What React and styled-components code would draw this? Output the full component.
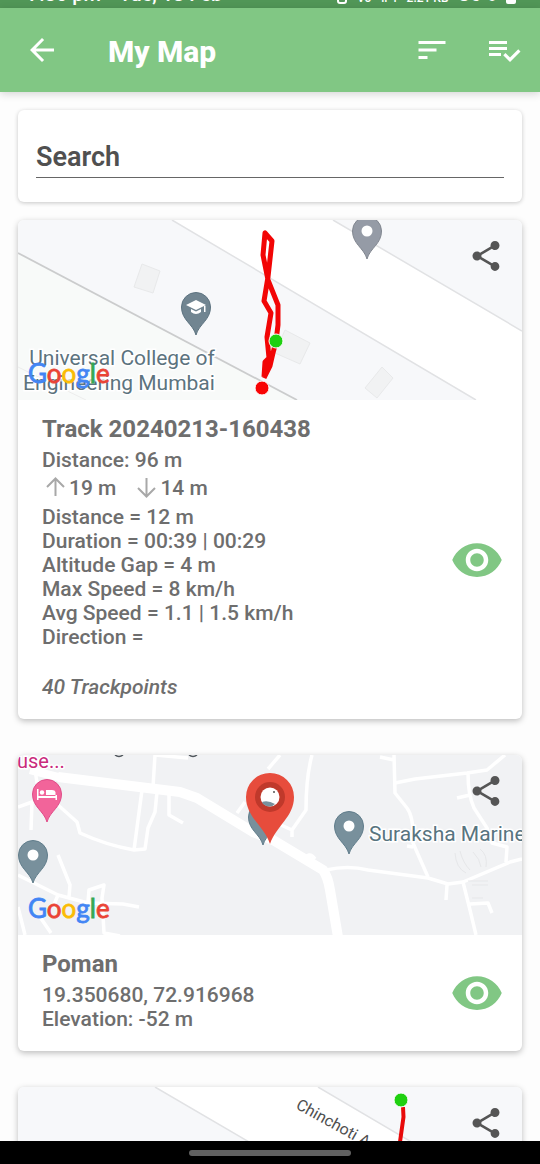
import React from "react";
import styled, { createGlobalStyle } from "styled-components";

const GlobalStyle = createGlobalStyle`
  *, *::before, *::after { box-sizing: border-box; }
  body { margin: 0; background: #fdfdfd; }
  body, button, input { font-family: Roboto, "Noto Sans", sans-serif; }
`;

const Screen = styled.div`
  display: flex;
  flex-direction: column;
  height: 100vh;
  background: #fdfdfd;
  color: #6e6e6e;
`;

const StatusBar = styled.div`
  display: flex;
  flex: none;
  align-items: flex-end;
  justify-content: space-between;
  height: 8px;
  padding: 0 24px 4px 28px;
  overflow: hidden;
  background: #519657;
  color: #fff;
`;

const StatusGroup = styled.div`
  display: flex;
  align-items: flex-end;
  gap: ${(p) => p.$gap}px;
  white-space: pre;
`;

const StatusText = styled.span`
  font-size: ${(p) => (p.$small ? 12 : 20)}px;
  font-weight: 500;
  line-height: ${(p) => (p.$small ? 12 : 20)}px;
`;

const Toolbar = styled.header`
  position: relative;
  display: flex;
  flex: none;
  align-items: center;
  height: 84px;
  padding: 0 18px 0 24px;
  background: #81c784;
  color: #fff;
  box-shadow: 0 2px 8px rgba(0, 0, 0, 0.16);
`;

const Title = styled.h1`
  flex: 1;
  margin: 0 0 0 48px;
  padding-top: 3px;
  font-size: 30px;
  font-weight: 800;
  line-height: 36px;
`;

const Actions = styled.div`
  display: flex;
  gap: 36px;
`;

const IconButton = styled.button`
  display: block;
  flex: none;
  padding: 0;
  border: 0;
  background: none;
  color: inherit;
  cursor: pointer;

  svg {
    display: block;
    width: ${(p) => p.$size || 36}px;
    height: ${(p) => p.$size || 36}px;
    fill: currentColor;
  }
`;

const Content = styled.main`
  flex: 1;
  min-height: 0;
  padding: 18px;
  overflow: hidden auto;
  scrollbar-width: none;
`;

const cardShadow = "0 2px 6px rgba(0, 0, 0, 0.26)";

const SearchBox = styled.form`
  padding: 26px 18px 24px;
  margin-bottom: 18px;
  border-radius: 6px;
  background: #fff;
  box-shadow: 0 1px 4px rgba(0, 0, 0, 0.22);
`;

const SearchInput = styled.input`
  display: block;
  width: 100%;
  height: 42px;
  padding: 0;
  border: 0;
  border-bottom: 1px solid #666;
  border-radius: 0;
  outline: 0;
  background: none;
  color: #505050;
  font-size: 27px;
  font-weight: 600;

  &::placeholder { color: #505050; opacity: 1; }
`;

const List = styled.div`
  display: flex;
  flex-direction: column;
  gap: 36px;
`;

const Card = styled.article`
  border-radius: 6px;
  background: #fff;
  box-shadow: ${cardShadow};
`;

const MapArea = styled.div`
  position: relative;
  height: 180px;
  overflow: hidden;
  border-radius: 6px 6px 0 0;
`;

const MapDrawing = styled.svg`
  display: block;
  width: 100%;
  height: 100%;
  font-family: Roboto, "Noto Sans", sans-serif;
`;

const ShareButton = styled(IconButton)`
  position: absolute;
  top: 18px;
  right: 18px;
  color: #555;
`;

const CardBody = styled.div`
  display: flex;
  align-items: center;
  justify-content: space-between;
  padding: 0 18px 0 24px;
`;

const Details = styled.div`
  padding: 15px 0 20px;
`;

const Heading = styled.h2`
  margin: 0 0 5px;
  font-size: 24px;
  font-weight: 700;
  line-height: 28px;
`;

const Line = styled.p`
  margin: 0;
  font-size: 21px;
  font-weight: 500;
  line-height: 24px;
`;

const Climb = styled.div`
  display: flex;
  gap: 20px;
  padding: 4px 0 5px 3px;
`;

const ClimbItem = styled(Line)`
  display: flex;
  align-items: center;
  gap: 3px;

  svg { width: 21px; height: 24px; }
`;

const Footnote = styled(Line)`
  margin-top: 26px;
  font-style: italic;
`;

const ViewButton = styled(IconButton)`
  color: #81c784;
`;

const NavBar = styled.footer`
  display: flex;
  flex: none;
  align-items: center;
  justify-content: center;
  height: 23px;
  background: #000;
`;

const NavPill = styled.div`
  width: 30%;
  height: 6px;
  border-radius: 3px;
  background: #616161;
`;

const Icon = ({ d }) => (
  <svg viewBox="0 0 24 24" aria-hidden="true">
    <path d={d} />
  </svg>
);

const ICONS = {
  back: "M20 11H7.83l5.59-5.59L12 4l-8 8 8 8 1.41-1.41L7.83 13H20v-2z",
  sort: "M3 18h6v-2H3v2zM3 6v2h18V6H3zm0 7h12v-2H3v2z",
  select:
    "M14 10H2v2h12v-2zm0-4H2v2h12V6zM2 16h8v-2H2v2zm19.500-4.500L23 13l-6.990 7-4.510-4.500L13 14l3.010 3 5.490-5.500z",
  share:
    "M18 16.080c-.76 0-1.440.3-1.960.77L8.910 12.700c.05-.23.09-.46.09-.7s-.04-.47-.09-.7l7.050-4.110c.54.5 1.250.81 2.040.81 1.660 0 3-1.340 3-3s-1.340-3-3-3-3 1.340-3 3c0 .24.04.47.09.7L8.040 9.810C7.500 9.310 6.790 9 6 9c-1.660 0-3 1.340-3 3s1.340 3 3 3c.79 0 1.500-.31 2.040-.81l7.120 4.160c-.05.21-.08.43-.08.65 0 1.610 1.310 2.920 2.920 2.920s2.920-1.310 2.920-2.920-1.310-2.920-2.920-2.920z",
  eye: "M12 4.500C7 4.500 2.730 7.610 1 12c1.730 4.390 6 7.500 11 7.500s9.270-3.110 11-7.500c-1.730-4.390-6-7.500-11-7.500zM12 17c-2.760 0-5-2.240-5-5s2.240-5 5-5 5 2.240 5 5-2.240 5-5 5zm0-8c-1.660 0-3 1.340-3 3s1.340 3 3 3 3-1.340 3-3-1.340-3-3-3z",
};

const ThinArrow = ({ down }) => (
  <svg viewBox="0 0 21 24" fill="none" stroke="#a8a8a8" strokeWidth="2" aria-hidden="true">
    {down ? <path d="M10.500 2v18M2 12l8.500 8.500L19 12" /> : <path d="M10.500 20V3M2 11l8.500-8.500L19 11" />}
  </svg>
);

const Pin = ({ x, y, fill, edge, children }) => (
  <g transform={`translate(${x} ${y})`}>
    <path
      d="M0 28C-3 17-14.500 13-14.500 0A14.500 14.500 0 1 1 14.500 0C14.500 13 3 17 0 28Z"
      fill={fill}
      stroke={edge}
      strokeWidth="1"
    />
    {children || <circle r="5.500" fill="#fff" />}
  </g>
);

const googleLetters = [
  ["G", "#4285f4"],
  ["o", "#ea4335"],
  ["o", "#fbbc05"],
  ["g", "#4285f4"],
  ["l", "#34a853"],
  ["e", "#ea4335"],
];

const GoogleMark = ({ y }) => (
  <text x="10" y={y} fontFamily="Lato, sans-serif" fontSize="26" strokeWidth="0.800">
    {googleLetters.map(([letter, color], i) => (
      <tspan key={i} fill={color} stroke={color}>
        {letter}
      </tspan>
    ))}
  </text>
);

const Dot = ({ x, y, fill }) => <circle cx={x} cy={y} r="7" fill={fill} stroke="#fff" strokeWidth="1" />;

const mapProps = { viewBox: "0 0 504 180", preserveAspectRatio: "xMidYMid slice", role: "img" };

const CollegeMap = () => (
  <MapDrawing {...mapProps} aria-label="Map of the recorded track">
    <rect width="504" height="180" fill="#f7f8fa" />
    <path d="M0 33 279 180H0Z" fill="#f8faf9" />
    <path d="M154 0H315L504 111V180H458Z" fill="#fff" />
    <path d="M154 0 458 180M315 0 504 111" stroke="#e1e2e4" strokeWidth="1.500" />
    <path d="M0 33 279 180" stroke="#cbcccd" strokeWidth="1.800" />
    <path d="M0 147 68 180" stroke="#ececec" />
    <g fill="#f1f2f3" stroke="#e8e9ea">
      <path d="M124 44 142 51 135 73 116 67Z" />
      <path d="M267 110 292 123 282 144 257 133Z" />
      <path d="M364 147 375 158 359 178 347 168Z" />
    </g>
    <Pin x={349} y={11} fill="#959ba6" edge="#80868f" />
    <Pin x={178} y={87} fill="#718591" edge="#5d7380">
      <path d="M0-7 10-2 0 3-10-2Z" fill="#fff" />
      <path d="M-5 2v3q5 4 10 0V2L0 4.500ZM8-1h1.500v6H8Z" fill="#fff" />
    </Pin>
    <g fill="#5c737e" fontSize="21" stroke="#fff" strokeWidth="3" paintOrder="stroke" textAnchor="middle">
      <text x="104" y="145">Universal College of</text>
      <text x="101" y="170">Engineering Mumbai</text>
    </g>
    <g stroke="#f8faf9" strokeWidth="3" strokeLinecap="round">
      <path d="M14 149 36 149M40 160H88" strokeOpacity="0.700" />
    </g>
    <GoogleMark y={163} />
    <path
      d="M246 157 247 142 251 138 249 117 253 93 246 81 250 57 254 21 247 13 245 35 250 60 260 85 260 105 258 121 255 133 252 146 246 158M248 153 253 131M250 149 251 139"
      fill="none"
      stroke="#f20505"
      strokeWidth="5"
      strokeLinejoin="round"
    />
    <Dot x={258} y={121} fill="#1fd010" />
    <Dot x={244} y={168} fill="#f80404" />
  </MapDrawing>
);

const PomanMap = () => (
  <MapDrawing {...mapProps} aria-label="Map of Poman">
    <rect width="504" height="180" fill="#f1f2f4" />
    <g fill="none" stroke="#fff" strokeWidth="3.500" strokeLinejoin="round">
      <path d="M137 0 135 32M124 35 116 95M139 37 137 57 130 73 127 94 116 95Q88 90 62 78L59 67 40 50 19 28 15 0" />
      <path d="M151 40V60L165 68M0 52 14 47 13 75M219 58 227 47M137 0 170 3" />
      <path d="M0 120 40 140 70 148 105 149 121 152M40 100 52 130 51 142M70 147 71 135 86 130 84 143 86 178 102 181M0 152 7 180M22 162 33 178M40 140 35 152" />
      <path d="M250 14 262 0M294 0Q288 22 288 55L274 75V82M274 75 263 70M362 2 376 5M376 0 377 38 389 53Q396 62 395 88L410 122M389 91 395 92" />
      <path d="M377 28 397 24 449 18 469 15 487 0M450 18Q450 40 456 53L469 73 474 88 489 92 488 107M439 43 452 40" />
      <path d="M308 115Q330 110 350 115L410 123 430 129 445 127 492 107 504 104M429 130 428 145M445 127 452 155 458 180M452 149 470 148 474 158M285 106Q291 95 297 104" />
      <path d="M12 15 40 22 162 37" strokeWidth="8" />
      <path d="M40 22 162 37 179 43 235 77 255 85 305 115Q310 122 312 135L320 182" strokeWidth="10" />
    </g>
    <g fill="none" stroke="#e6e7e9">
      <path d="M437 98Q438 113 448 118M442 96Q445 108 452 115M462 94Q470 100 468 112M455 97Q462 104 463 112M450 126H470M454 130H470M454 143H465" />
    </g>
    <path d="M97 0Q101 3 105 0M171 0Q175 3 179 0" fill="none" stroke="#50565c" strokeWidth="1.500" />
    <g stroke="#fff" strokeWidth="3" paintOrder="stroke">
      <text x="-1" y="13" fontSize="20" fill="#c92a7c">use...</text>
      <text x="351" y="86" fontSize="21" fill="#587480">Suraksha Marine</text>
    </g>
    <Pin x={29} y={39} fill="#f2649a" edge="#e04c88">
      <path d="M-10-5h1.500v7H8.500V-2Q8-4 5-4H-1V1H10V6H8.500V4h-17V6H-10Z" fill="#fff" />
      <circle cx="-5" cy="-1.500" r="2.200" fill="#fff" />
    </Pin>
    <Pin x={15} y={100} fill="#78909c" edge="#607d8b" />
    <Pin x={331} y={71} fill="#78909c" edge="#607d8b" />
    <Pin x={245} y={62} fill="#78909c" edge="#607d8b" />
    <path d="M252 89C246 71 228 62 228 42A24 24 0 1 1 276 42C276 62 258 71 252 89Z" fill="#e74c3c" />
    <circle cx="252" cy="42" r="15" fill="#c0392b" />
    <circle cx="252" cy="42" r="9.500" fill="#fff" />
    <path d="M244 47Q250 45 257 49 252 54 245 49Z" fill="#78909c" />
    <circle cx="256" cy="37" r="1" fill="#555" />
    <GoogleMark y={163} />
  </MapDrawing>
);

const ChinchotiMap = () => (
  <MapDrawing {...mapProps} aria-label="Map of the Chinchoti track">
    <rect width="504" height="180" fill="#f7f8fa" />
    <path d="M137 0H300L504 120V180H445Z" fill="#fff" />
    <path d="M137 0 445 180M300 0 504 120" stroke="#e1e2e4" strokeWidth="1.500" />
    <text transform="translate(277 21) rotate(29)" fontSize="16" fill="#505050">
      Chinchoti Anjur
    </text>
    <path d="M385 20 385.500 30 381 62 375 110" fill="none" stroke="#e80a0a" strokeWidth="4" />
    <Dot x={383} y={13} fill="#1fd010" />
  </MapDrawing>
);

const MapHeader = ({ children, name }) => (
  <MapArea>
    {children}
    <ShareButton type="button" aria-label={`Share ${name}`}>
      <Icon d={ICONS.share} />
    </ShareButton>
  </MapArea>
);

const stats = [
  "Distance = 12 m",
  "Duration = 00:39 | 00:29",
  "Altitude Gap = 4 m",
  "Max Speed = 8 km/h",
  "Avg Speed = 1.1 | 1.5 km/h",
  "Direction =",
];

export default function App() {
  return (
    <Screen>
      <GlobalStyle />
      <StatusBar>
        <StatusGroup $gap={18}>
          <StatusText>7:30 pm</StatusText>
          <StatusText>Tue, 13 Feb</StatusText>
        </StatusGroup>
        <StatusGroup $gap={10}>
          <svg width="10" height="14" aria-hidden="true">
            <rect x="1" y="1" width="8" height="12" rx="2" fill="none" stroke="#fff" strokeWidth="2" />
          </svg>
          <StatusText $small>Vo</StatusText>
          <StatusText $small>ıı  ı</StatusText>
          <StatusText $small>2.21 KB</StatusText>
          <StatusText>36%</StatusText>
          <svg width="10" height="14" aria-hidden="true">
            <rect width="10" height="14" rx="2" fill="#fff" />
          </svg>
        </StatusGroup>
      </StatusBar>
      <Toolbar>
        <IconButton type="button" aria-label="Back">
          <Icon d={ICONS.back} />
        </IconButton>
        <Title>My Map</Title>
        <Actions>
          <IconButton type="button" aria-label="Sort">
            <Icon d={ICONS.sort} />
          </IconButton>
          <IconButton type="button" aria-label="Select">
            <Icon d={ICONS.select} />
          </IconButton>
        </Actions>
      </Toolbar>
      <Content>
        <SearchBox role="search">
          <SearchInput type="text" placeholder="Search" aria-label="Search" />
        </SearchBox>
        <List>
          <Card>
            <MapHeader name="track">
              <CollegeMap />
            </MapHeader>
            <CardBody>
              <Details>
                <Heading>Track 20240213-160438</Heading>
                <Line>Distance: 96 m</Line>
                <Climb>
                  <ClimbItem>
                    <ThinArrow />
                    19 m
                  </ClimbItem>
                  <ClimbItem>
                    <ThinArrow down />
                    14 m
                  </ClimbItem>
                </Climb>
                {stats.map((s) => (
                  <Line key={s}>{s}</Line>
                ))}
                <Footnote>40 Trackpoints</Footnote>
              </Details>
              <ViewButton type="button" $size={54} aria-label="Show track">
                <Icon d={ICONS.eye} />
              </ViewButton>
            </CardBody>
          </Card>
          <Card>
            <MapHeader name="Poman">
              <PomanMap />
            </MapHeader>
            <CardBody>
              <Details>
                <Heading>Poman</Heading>
                <Line>19.350680, 72.916968</Line>
                <Line>Elevation: -52 m</Line>
              </Details>
              <ViewButton type="button" $size={54} aria-label="Show Poman">
                <Icon d={ICONS.eye} />
              </ViewButton>
            </CardBody>
          </Card>
          <Card>
            <MapHeader name="Chinchoti track">
              <ChinchotiMap />
            </MapHeader>
          </Card>
        </List>
      </Content>
      <NavBar>
        <NavPill />
      </NavBar>
    </Screen>
  );
}
